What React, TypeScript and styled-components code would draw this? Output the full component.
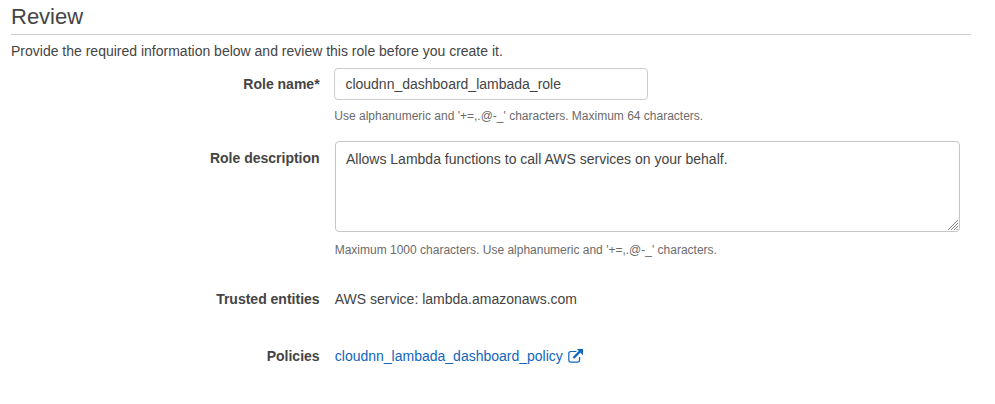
import React from "react";
import styled, { createGlobalStyle } from "styled-components";

const GlobalStyle = createGlobalStyle`
  * { box-sizing: border-box; }
  body { margin: 0; background: #fff; color: #444; font: 14px/20px "Liberation Sans", Arial, sans-serif; }
`;
const Page = styled.main`
  width: 995px; height: 404px; padding: 0 24px 0 11px; overflow: hidden;
`;
const Title = styled.h1`
  margin: 0; height: 35px; padding-top: 2px; border-bottom: 1px solid #ccc;
  font-size: 22px; line-height: 30px; font-weight: 400;
`;
const Intro = styled.p`
  margin: 6px 0 7px;
`;
const Row = styled.div<{ $height: number }>`
  display: grid; grid-template-columns: 308.6px 1fr; column-gap: 14.4px;
  height: ${(p) => p.$height}px;
`;
const Label = styled.label<{ $top?: number }>`
  padding-top: ${(p) => p.$top ?? 0}px; text-align: right; font-weight: 700;
`;
const Field = styled.div`
  display: flex; flex-direction: column; align-items: flex-start;
`;
const NameInput = styled.input`
  width: 314px; height: 32px; padding: 0 10px 0 10.4px; border: 1px solid #ccc; border-radius: 4px;
  background: #fff; color: #444; font: inherit; outline: none;
`;
const DescriptionBox = styled.div`
  position: relative; width: 625px; height: 91px; margin-left: 1px;
`;
const Description = styled.textarea`
  display: block; width: 100%; height: 100%; padding: 7px 10px; border: 1px solid #c6c6c6; border-radius: 4px;
  background: #fff; color: #444; font: inherit; outline: none; resize: none;
`;
const Grip = styled.svg`
  position: absolute; right: 2px; bottom: 2px; pointer-events: none;
`;
const Hint = styled.small<{ $indent?: number; $top?: number }>`
  margin: ${(p) => p.$top ?? 8}px 0 0 ${(p) => p.$indent ?? 0}px;
  color: #6b6b6b; font-size: 12px; line-height: 16px;
`;
const Value = styled.div`
  padding-left: 0.8px;
`;
const PolicyLink = styled.a`
  display: inline-flex; align-items: center; gap: 5px; color: #1166bb; text-decoration: none;
`;

const ExternalIcon = () => (
  <svg width="16" height="14" viewBox="0 0 16 14" fill="none" stroke="currentColor">
    <path d="M8.5 2.5H3Q.8 2.5.8 4.5V11Q.8 13.1 3 13.1H9.4Q11.6 13.1 11.6 11V8" strokeWidth="1.2" />
    <path d="M5.4 9L12.4 2" strokeWidth="2.4" />
    <path d="M8.8 0H15V6.2Z" fill="currentColor" stroke="none" />
  </svg>
);

const ResizeGrip = () => (
  <Grip width="10" height="10" viewBox="0 0 10 10" stroke="#858585" fill="none">
    <path d="M0 10L10 0M3 10L10 3M6 10L10 6M8.5 10L10 8.5" />
  </Grip>
);

export default function App() {
  return (
    <>
      <GlobalStyle />
      <Page>
        <Title>Review</Title>
        <Intro>Provide the required information below and review this role before you create it.</Intro>
        <Row $height={73}>
          <Label htmlFor="role" $top={6}>Role name*</Label>
          <Field>
            <NameInput id="role" defaultValue="cloudnn_dashboard_lambada_role" />
            <Hint $indent={0.3}>Use alphanumeric and '+=,.@-_' characters. Maximum 64 characters.</Hint>
          </Field>
        </Row>
        <Row $height={148}>
          <Label htmlFor="description" $top={7}>Role description</Label>
          <Field>
            <DescriptionBox>
              <Description id="description" defaultValue="Allows Lambda functions to call AWS services on your behalf." />
              <ResizeGrip />
            </DescriptionBox>
            <Hint $indent={0.7} $top={10}>Maximum 1000 characters. Use alphanumeric and '+=,.@-_' characters.</Hint>
          </Field>
        </Row>
        <Row $height={57}>
          <Label as="div">Trusted entities</Label>
          <Value>AWS service: lambda.amazonaws.com</Value>
        </Row>
        <Row $height={20}>
          <Label as="div">Policies</Label>
          <Value><PolicyLink href="#">cloudnn_lambada_dashboard_policy<ExternalIcon /></PolicyLink></Value>
        </Row>
      </Page>
    </>
  );
}
